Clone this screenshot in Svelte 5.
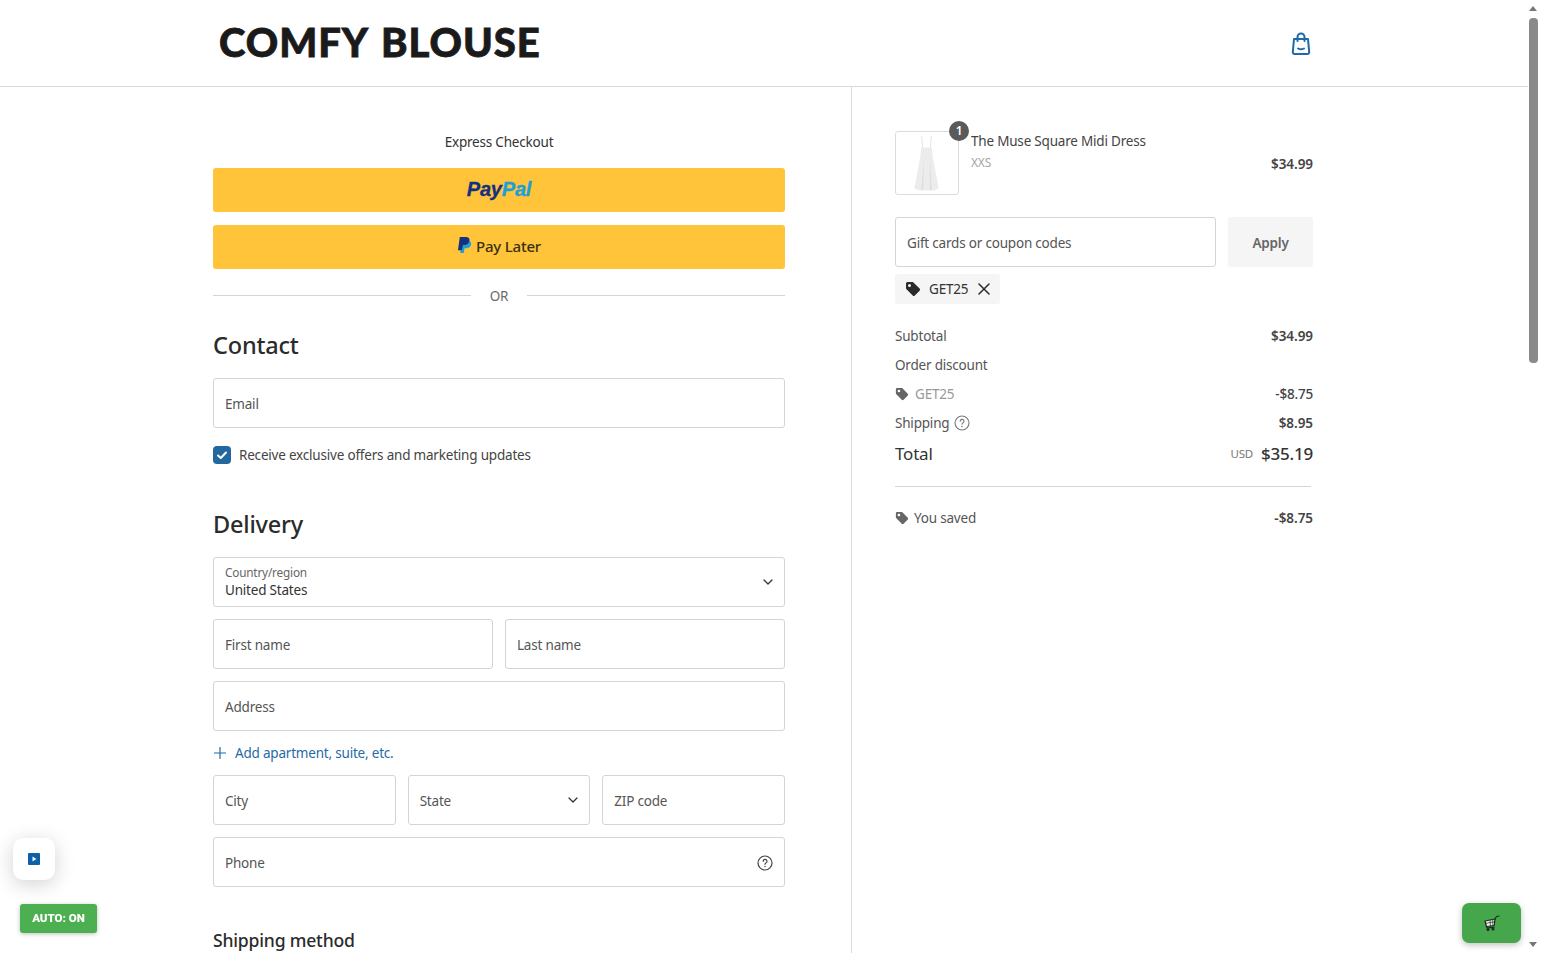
<script>
  const totals = [
    { label: 'Subtotal', value: '$34.99', bold: true },
    { label: 'Order discount', value: '' },
  ];
</script>

<div class="page">
  <header class="top">
    <div class="logo">COMFY BLOUSE</div>
    <svg class="bag" viewBox="0 0 20 24" width="20" height="24" fill="none" stroke="#1f6aa8" stroke-width="2" stroke-linecap="round" stroke-linejoin="round">
      <path d="M3 7h14l1.2 13.2a1.8 1.8 0 0 1-1.8 1.8H3.6a1.8 1.8 0 0 1-1.8-1.8z" />
      <path d="M6.5 9V5a3.5 3.5 0 0 1 7 0v4" />
      <path d="M7 16.5c1.8 1 4.2 1 6 0" />
    </svg>
  </header>

  <main class="cols">
    <section class="left">
      <p class="express">Express Checkout</p>
      <button class="pay first"><span class="pp1">Pay</span><span class="pp2">Pal</span></button>
      <button class="pay">
        <svg viewBox="0 0 16 20" width="15" height="19">
          <path fill="#1ba0d8" d="M5 5h6.5c2.5 0 4 1.500 3.500 4-.5 2.800-2.500 4-5 4H8l-.8 5H3.500z" />
          <path fill="#14307f" d="M3 1h6.500c2.800 0 4.300 1.500 3.800 4-.6 3-2.800 4.500-5.500 4.500H6.200L5.300 15H1z" />
        </svg>
        <span class="later">Pay Later</span>
      </button>
      <div class="or"><i></i><span>OR</span><i></i></div>

      <h2 class="contact">Contact</h2>
      <div class="field">Email</div>
      <label class="check">
        <span class="box">
          <svg viewBox="0 0 18 18" width="18" height="18" fill="none" stroke="#fff" stroke-width="2" stroke-linecap="round" stroke-linejoin="round"><path d="M5 9.500l2.800 2.500L13 6.500" /></svg>
        </span>
        Receive exclusive offers and marketing updates
      </label>

      <h2 class="delivery">Delivery</h2>
      <div class="stack">
        <div class="field select">
          <div class="stacked"><small>Country/region</small><span>United States</span></div>
          <svg class="chev" viewBox="0 0 10 6" width="10" height="6" fill="none" stroke="#333" stroke-width="1.300" stroke-linecap="round" stroke-linejoin="round"><path d="M1 1l4 4 4-4" /></svg>
        </div>
        <div class="two">
          <div class="field">First name</div>
          <div class="field">Last name</div>
        </div>
        <div class="field">Address</div>
      </div>
      <div class="add">
        <svg viewBox="0 0 12 12" width="12" height="12" fill="none" stroke="#1f6aa8" stroke-width="1.200" stroke-linecap="round"><path d="M6 .5v11M.5 6h11" /></svg>
        Add apartment, suite, etc.
      </div>
      <div class="stack">
        <div class="three">
          <div class="field">City</div>
          <div class="field select">State
            <svg class="chev" viewBox="0 0 10 6" width="10" height="6" fill="none" stroke="#333" stroke-width="1.300" stroke-linecap="round" stroke-linejoin="round"><path d="M1 1l4 4 4-4" /></svg>
          </div>
          <div class="field">ZIP code</div>
        </div>
        <div class="field select">Phone
          <svg viewBox="0 0 16 16" width="16" height="16" fill="none" stroke="#444" stroke-width="1.200" stroke-linecap="round">
            <circle cx="8" cy="8" r="7" />
            <path d="M6.200 6.300a1.900 1.900 0 1 1 2.700 1.700c-.6.300-.9.700-.9 1.300" />
            <path d="M8 11.500v.1" stroke-width="1.500" />
          </svg>
        </div>
      </div>
      <h3 class="shipping">Shipping method</h3>
    </section>

    <aside class="right">
      <div class="product">
        <div class="thumb">
          <svg viewBox="0 0 64 64" width="62" height="62">
            <path fill="none" stroke="#d8d8d8" stroke-width=".7" d="M26.500 4l1 12M36.500 4l-1 12" />
            <path fill="#ececec" d="M26 16h11l1 10 6 32-4 2H23l-4-2 6-32z" />
            <path fill="#dedede" d="M29 26l-3 34h2zM35 26l2 34h-2z" />
          </svg>
          <span class="badge">1</span>
        </div>
        <div class="pinfo">
          <div class="pname">The Muse Square Midi Dress</div>
          <div class="psize">XXS</div>
        </div>
        <b class="pprice">$34.99</b>
      </div>

      <div class="coupon">
        <div class="field grow">Gift cards or coupon codes</div>
        <div class="apply">Apply</div>
      </div>
      <div class="chip">
        <svg viewBox="0 0 16 16" width="16" height="16"><path fill="#2a2a2a" d="M1 2.500A1.500 1.500 0 0 1 2.500 1h4.800c.4 0 .8.200 1.100.4l6.200 6.200a1.500 1.500 0 0 1 0 2.100l-4.800 4.800a1.500 1.500 0 0 1-2.100 0L1.500 8.300A1.500 1.500 0 0 1 1 7.200zM4.500 6a1.500 1.500 0 1 0 0-3 1.500 1.500 0 0 0 0 3z" /></svg>
        <span>GET25</span>
        <svg viewBox="0 0 12 12" width="12" height="12" fill="none" stroke="#2a2a2a" stroke-width="1.500" stroke-linecap="round"><path d="M1 1l10 10M11 1L1 11" /></svg>
      </div>

      <div class="rows">
        {#each totals as t}
          <div class="row"><span>{t.label}</span><b>{t.value}</b></div>
        {/each}
        <div class="row">
          <span class="tagged muted">
            <svg viewBox="0 0 16 16" width="14" height="14"><path fill="#666" d="M1 2.500A1.500 1.500 0 0 1 2.500 1h4.800c.4 0 .8.200 1.100.4l6.200 6.200a1.500 1.500 0 0 1 0 2.100l-4.800 4.800a1.500 1.500 0 0 1-2.100 0L1.500 8.300A1.500 1.500 0 0 1 1 7.200zM4.500 6a1.500 1.500 0 1 0 0-3 1.500 1.500 0 0 0 0 3z" /></svg>
            GET25
          </span>
          <span class="amount">-$8.75</span>
        </div>
        <div class="row">
          <span class="tagged">Shipping
            <svg viewBox="0 0 16 16" width="16" height="16" fill="none" stroke="#777" stroke-width="1.100" stroke-linecap="round">
              <circle cx="8" cy="8" r="7" />
              <path d="M6.200 6.300a1.900 1.900 0 1 1 2.700 1.700c-.6.300-.9.700-.9 1.300" />
              <path d="M8 11.500v.1" stroke-width="1.500" />
            </svg>
          </span>
          <b>$8.95</b>
        </div>
        <div class="row total">
          <span>Total</span>
          <span class="sum"><small>USD</small><strong>$35.19</strong></span>
        </div>
      </div>
      <hr />
      <div class="row">
        <span class="tagged">
          <svg viewBox="0 0 16 16" width="14" height="14"><path fill="#666" d="M1 2.500A1.500 1.500 0 0 1 2.500 1h4.800c.4 0 .8.200 1.100.4l6.200 6.200a1.500 1.500 0 0 1 0 2.100l-4.800 4.800a1.500 1.500 0 0 1-2.100 0L1.500 8.300A1.500 1.500 0 0 1 1 7.200zM4.500 6a1.500 1.500 0 1 0 0-3 1.500 1.500 0 0 0 0 3z" /></svg>
          You saved
        </span>
        <b>-$8.75</b>
      </div>
    </aside>
  </main>
</div>

<div class="video">
  <svg viewBox="0 0 12 12" width="12" height="12"><rect width="12" height="12" rx="1" fill="#0f5ea8" /><path d="M4.500 3.500l4 2.500-4 2.500z" fill="#dff" /></svg>
</div>
<div class="auto">AUTO: ON</div>
<div class="cart">
  <svg viewBox="0 0 18 18" width="18" height="18" fill="none" stroke="#1d2a1d" stroke-width="1.200" stroke-linecap="round" stroke-linejoin="round">
    <path d="M2 7l10-2-.8 6.500-7.700 1z" fill="#f2f7f2" />
    <path d="M12 5l1.500-2.500L16 2" />
    <path d="M3 9.300l8.700-1.600M7 6.200l.5 6M9.700 5.600l.2 6.200" stroke-width=".7" />
    <path d="M3.500 12.500l.6 1.500 7-.8" />
    <circle cx="5" cy="15.500" r=".9" fill="#1d2a1d" />
    <circle cx="10" cy="15" r=".9" fill="#1d2a1d" />
  </svg>
</div>

<div class="scrollbar">
  <span class="arrow up"></span>
  <span class="thumbbar"></span>
  <span class="arrow down"></span>
</div>

<style>
  :global(body) {
    margin: 0;
    background: #fff;
    overflow: hidden;
  }
  .page {
    width: 1528px;
    height: 953px;
    overflow: hidden;
    font-family: "Noto Sans", "Open Sans", sans-serif;
    font-size: 13.5px;
    letter-spacing: -0.2px;
    line-height: 20px;
    color: #4a4a4a;
  }
  .top {
    height: 86px;
    border-bottom: 1px solid #d9d9d9;
    display: flex;
    align-items: center;
    justify-content: space-between;
    padding: 0 217px 0 219px;
  }
  .logo {
    font-family: Lato, sans-serif;
    font-weight: 900;
    font-size: 40px;
    line-height: 82px;
    color: #1a1a1a;
    letter-spacing: 1px;
    word-spacing: 3px;
    -webkit-text-stroke: 0.8px #1a1a1a;
    margin-bottom: 2px;
  }
  .bag { margin-top: 1px; }
  .cols {
    display: grid;
    grid-template-columns: 852px 1fr;
    height: 866px;
  }
  .left {
    border-right: 1px solid #d9d9d9;
    padding: 45px 66px 0 213px;
    min-width: 0;
  }
  .express {
    margin: 0 0 16px;
    text-align: center;
    color: #333;
  }
  .pay {
    display: flex;
    align-items: center;
    justify-content: center;
    gap: 4px;
    width: 100%;
    height: 44px;
    padding: 0 0 3px;
    border: 0;
    border-radius: 3px;
    background: #ffc439;
    box-sizing: border-box;
    font: inherit;
    letter-spacing: inherit;
  }
  .pay.first { gap: 0; margin-bottom: 13px; }
  .pp1, .pp2 {
    font-family: "Liberation Sans", sans-serif;
    font-style: italic;
    font-weight: 700;
    font-size: 20px;
    color: #14307f;
    -webkit-text-stroke: 0.3px currentColor;
  }
  .pp2 { color: #1ba0d8; }
  .later { font-size: 15px; font-weight: 500; color: #3a3015; }
  .or {
    display: flex;
    align-items: center;
    gap: 19px;
    height: 18px;
    margin-top: 17px;
    color: #6b6b6b;
  }
  .or i { flex: 1; height: 1px; background: #d4d4d4; }
  .or span { position: relative; top: 1px; }
  h2, h3 { margin: 0; font-weight: 500; color: #2b2b2b; }
  h2 { font-size: 23.5px; line-height: 32px; }
  .contact { margin-top: 25px; margin-bottom: 17px; }
  .delivery { margin-top: 44px; margin-bottom: 17px; }
  .field {
    height: 50px;
    box-sizing: border-box;
    border: 1px solid #d4d4d4;
    border-radius: 3px;
    padding: 2px 11px 0;
    display: flex;
    align-items: center;
    color: #555;
    background: #fff;
  }
  .select { justify-content: space-between; }
  .stacked { display: flex; flex-direction: column; margin-top: -3px; }
  .stacked small { font-size: 11.8px; line-height: 16px; color: #666; }
  .stacked span { line-height: 20px; color: #333; }
  .chev { margin-top: -2px; }
  .check {
    display: flex;
    align-items: center;
    gap: 8px;
    height: 18px;
    margin-top: 18px;
    color: #444;
  }
  .box {
    width: 18px;
    height: 18px;
    border-radius: 4px;
    background: #22689f;
    display: block;
  }
  .box svg { display: block; }
  .stack { display: flex; flex-direction: column; gap: 12px; }
  .two { display: grid; grid-template-columns: 1fr 1fr; gap: 12px; }
  .three { display: grid; grid-template-columns: 1fr 1fr 1fr; gap: 12px; }
  .add {
    display: flex;
    align-items: center;
    gap: 9px;
    height: 20px;
    margin: 12px 0;
    padding-left: 1px;
    color: #1f6aa8;
  }
  .shipping {
    margin-top: 41px;
    font-size: 17.6px;
    line-height: 24px;
  }
  .right {
    padding: 44px 215px 0 43px;
    min-width: 0;
  }
  .product { display: flex; align-items: center; gap: 12px; }
  .thumb {
    position: relative;
    width: 64px;
    height: 64px;
    box-sizing: border-box;
    border: 1px solid #dcdcdc;
    border-radius: 3px;
    flex: none;
  }
  .thumb svg { display: block; }
  .badge {
    position: absolute;
    top: -11px;
    right: -11px;
    width: 20px;
    height: 20px;
    border-radius: 50%;
    background: #5a5a5a;
    color: #fff;
    font-size: 12px;
    font-weight: 600;
    text-align: center;
    line-height: 20px;
  }
  .pinfo { flex: 1; align-self: flex-start; margin-left: 0; }
  .pname { color: #444; }
  .psize { margin-top: 2px; font-size: 12px; color: #a6a6a6; }
  .pprice { color: #444; font-weight: 600; margin-top: 2px; letter-spacing: -0.05px; }
  .coupon { display: flex; gap: 12px; margin-top: 22px; }
  .grow { flex: 1; }
  .apply {
    width: 85px;
    height: 50px;
    padding-top: 2px;
    box-sizing: border-box;
    display: flex;
    align-items: center;
    justify-content: center;
    background: #f5f5f5;
    border-radius: 3px;
    color: #666;
    font-weight: 600;
  }
  .chip {
    display: flex;
    align-items: center;
    gap: 8px;
    width: fit-content;
    height: 30px;
    margin-top: 7px;
    padding: 0 10px;
    background: #f5f5f5;
    border-radius: 3px;
    color: #333;
  }
  .chip span { margin-right: 2px; }
  .rows {
    display: flex;
    flex-direction: column;
    gap: 9px;
    margin-top: 22px;
  }
  .row {
    display: flex;
    justify-content: space-between;
    align-items: center;
    height: 20px;
    color: #555;
  }
  .row b { font-weight: 600; color: #444; letter-spacing: -0.05px; }
  .amount { color: #444; font-weight: 500; }
  .tagged { display: flex; align-items: center; gap: 5px; }
  .tagged.muted { color: #999; gap: 6px; }
  .total { height: 24px; color: #333; font-size: 17px; }
  .sum { display: flex; align-items: center; gap: 8px; }
  .sum small { font-size: 11.5px; color: #777; }
  .sum strong { font-size: 17px; font-weight: 500; color: #333; }
  hr {
    border: 0;
    height: 1px;
    background: #d4d4d4;
    margin: 20px 2px 21px 0;
  }
  .video {
    position: fixed;
    left: 13px;
    top: 838px;
    width: 42px;
    height: 42px;
    border-radius: 10px;
    background: #fff;
    box-shadow: 0 4px 20px rgba(0, 0, 0, 0.18);
    display: flex;
    align-items: center;
    justify-content: center;
  }
  .auto {
    position: fixed;
    left: 20px;
    top: 904px;
    width: 77px;
    height: 29px;
    border-radius: 3px;
    background: #4caf50;
    color: #fff;
    font: 900 11.5px/29px Roboto, sans-serif;
    text-align: center;
    box-shadow: 0 1px 4px rgba(0, 0, 0, 0.25);
  }
  .cart {
    position: fixed;
    left: 1462px;
    top: 903px;
    width: 59px;
    height: 40px;
    border-radius: 7px;
    background: #46a64b;
    box-shadow: 0 2px 6px rgba(0, 0, 0, 0.25);
    display: flex;
    align-items: center;
    justify-content: center;
  }
  .scrollbar {
    position: fixed;
    top: 0;
    right: 0;
    width: 13px;
    height: 953px;
    background: #fff;
  }
  .thumbbar {
    position: absolute;
    left: 1px;
    top: 18px;
    width: 9px;
    height: 345px;
    border-radius: 4px;
    background: #8a8a8a;
  }
  .arrow {
    position: absolute;
    left: 1px;
    width: 0;
    height: 0;
    border-left: 4.5px solid transparent;
    border-right: 4.5px solid transparent;
  }
  .up { top: 6px; border-bottom: 5px solid #777; }
  .down { bottom: 6px; border-top: 5px solid #777; }
</style>
